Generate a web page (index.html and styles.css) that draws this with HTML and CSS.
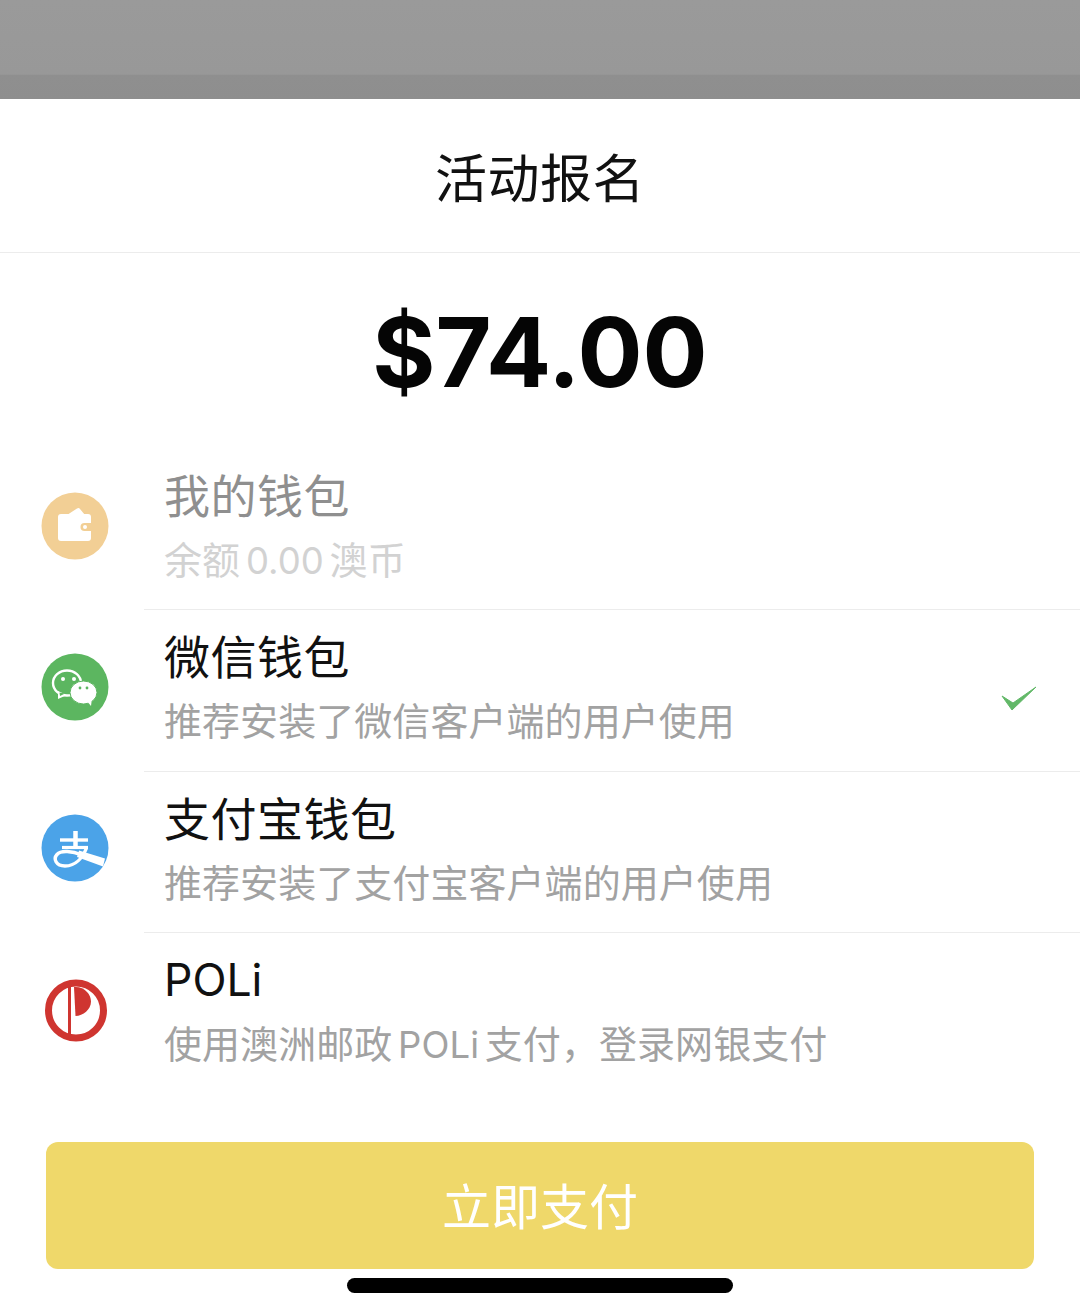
FILE: index.html
```html
<!DOCTYPE html>
<html lang="zh">
<head>
<meta charset="utf-8">
<title>活动报名</title>
<link rel="stylesheet" href="styles.css">
</head>
<body>
<div class="page">
  <div class="backdrop"></div>
  <header class="header"><h1 class="title">活动报名</h1></header>
  <div class="amount">$74.00</div>
  <ul class="methods">
    <li class="method disabled">
      <span class="icon">
        <svg viewBox="0 0 68 68" width="68" height="68">
          <circle cx="34" cy="34" r="33.500" fill="#f2cf95"/>
          <path d="M26 23 L36 16.500 Q38 15.500 39 17 L44 23 Z" fill="#fff"/>
          <rect x="17" y="22" width="33" height="27" rx="3" fill="#fff"/>
          <path d="M50 31H43.500a4 4 0 0 0 0 8H50Z" fill="#f2cf95"/>
          <circle cx="44" cy="35" r="2" fill="#fff"/>
        </svg>
      </span>
      <div class="body">
        <div class="name">我的钱包</div>
        <div class="desc">余额 <span class="lat">0.00</span> 澳币</div>
      </div>
    </li>
    <li class="method">
      <span class="icon">
        <svg viewBox="0 0 68 68" width="68" height="68">
          <circle cx="34" cy="34" r="33.500" fill="#5cb660"/>
          <ellipse cx="26" cy="30" rx="14" ry="12.500" fill="none" stroke="#fff" stroke-width="2.400"/>
          <path d="M17 38 L17 46 L26 42 Z" fill="#fff"/>
          <path d="M18.500 39.500 L19 43 L24 40.500 Z" fill="#5cb660"/>
          <circle cx="22" cy="26" r="2" fill="#fff"/>
          <circle cx="33" cy="26" r="2" fill="#fff"/>
          <ellipse cx="42.500" cy="39.500" rx="13.500" ry="11.500" fill="#fff" stroke="#5cb660" stroke-width="1"/>
          <path d="M46 48 L50 53 L51 45 Z" fill="#fff"/>
          <circle cx="39" cy="35" r="1.400" fill="#5cb660"/>
          <circle cx="46" cy="35" r="1.400" fill="#5cb660"/>
        </svg>
      </span>
      <div class="body">
        <div class="name">微信钱包</div>
        <div class="desc">推荐安装了微信客户端的用户使用</div>
      </div>
      <svg class="check" viewBox="0 0 36 26" width="36" height="26">
        <path d="M1 10 L11 24 L35 1 L12 17 Z" fill="#62b868" stroke="#62b868" stroke-width="1" stroke-linejoin="round"/>
      </svg>
    </li>
    <li class="method">
      <span class="icon">
        <svg viewBox="0 0 68 68" width="68" height="68">
          <circle cx="34" cy="34" r="33.500" fill="#4ba3e8"/>
          <g fill="none" stroke="#fff">
            <path d="M19 26H47" stroke-width="3.400"/>
            <path d="M34.500 17V33" stroke-width="4.500"/>
            <path d="M21 33.500H47" stroke-width="3.200"/>
            <path d="M45.500 34C42 43 35 52 24 52 15 52 12 45 16 40.500 20 36 31 37 41 41" stroke-width="3.400"/>
          </g>
          <path d="M38 36.500 L64 44.500 L62 52.500 L36 43 Z" fill="#fff"/>
        </svg>
      </span>
      <div class="body">
        <div class="name">支付宝钱包</div>
        <div class="desc">推荐安装了支付宝客户端的用户使用</div>
      </div>
    </li>
    <li class="method">
      <span class="icon">
        <svg viewBox="0 0 68 68" width="68" height="68">
          <circle cx="35" cy="34.500" r="27.500" fill="#fff" stroke="#cf3530" stroke-width="7"/>
          <rect x="27" y="5" width="3" height="58" fill="#cf3530"/>
          <path d="M33 11C43 10 50 18 50 25.500 50 33.500 42 40 34.500 40Z" fill="#cf3530"/>
        </svg>
      </span>
      <div class="body">
        <div class="name lat-name">POLi</div>
        <div class="desc">使用澳洲邮政 <span class="lat">POLi</span> 支付，登录网银支付</div>
      </div>
    </li>
  </ul>
  <button class="pay" type="button">立即支付</button>
  <div class="home-bar"></div>
</div>
</body>
</html>
```
FILE: styles.css
```css
* { box-sizing: border-box; }
html, body { margin: 0; padding: 0; background: #fff; }
body { font-family: Inter, "Noto Sans CJK SC", "Noto Sans", sans-serif; color: #000; }
.page { width: 1080px; height: 1315px; overflow: hidden; display: flex; flex-direction: column; background: #fff; }
.backdrop { height: 99px; flex: none; background: linear-gradient(#9a9a9a, #989898 75%, #8f8f8f 76%, #8e8e8e); }
.header { height: 154px; flex: none; border-bottom: 1px solid #ececec; display: flex; align-items: center; justify-content: center; padding-top: 8px; }
.title { margin: 0; font-size: 52px; font-weight: 400; line-height: 1; letter-spacing: 0.5px; color: #111; }
.amount { height: 195px; flex: none; display: flex; align-items: center; justify-content: center; font-weight: 700; font-size: 96.5px; color: #050505; padding-top: 3px; }
.methods { list-style: none; margin: 0; padding: 0; flex: none; }
.method { height: 161.33px; display: flex; align-items: center; padding-left: 41px; position: relative; }
.icon { width: 68px; height: 68px; flex: none; display: block; margin-bottom: 6px; }
.icon svg { display: block; }
.body { flex: 1; height: 100%; margin-left: 35px; padding-left: 20px; border-top: 1px solid #ececec; padding-top: 17px; }
.method:first-child .body { border-top-color: transparent; }
.name { font-size: 46px; line-height: 60px; letter-spacing: 0.5px; color: #111; }
.lat-name { font-size: 44.5px; letter-spacing: 0; }
.desc { font-size: 38px; line-height: 52px; margin-top: 8px; color: #a2a2a2; word-spacing: -5px; letter-spacing: 0.06px; }
.lat { font-size: 36.5px; }
.disabled .name { color: #8f8f8f; }
.disabled .desc { color: #d2d2d2; }
.check { position: absolute; right: 43px; top: 77px; }
.pay { flex: none; display: block; width: 988px; height: 127px; margin: 49px 46px 0; border: 0; border-radius: 12px; background: #efd86a; color: #fff; font-family: inherit; font-size: 49px; line-height: 1; padding: 4px 0 0; }
.home-bar { flex: none; width: 386px; height: 15px; margin: 9px auto 0; border-radius: 8px; background: #000; }
```
